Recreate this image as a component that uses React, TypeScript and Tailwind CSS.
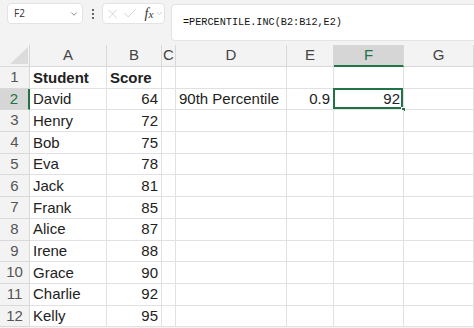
import { ChevronDown, X, Check } from "lucide-react";

const cols = ["A", "B", "C", "D", "E", "F", "G"];

const rows: [string, string, string, string][] = [
  ["Student", "Score", "", ""],
  ["David", "64", "90th Percentile", "0.9"],
  ["Henry", "72", "", ""],
  ["Bob", "75", "", ""],
  ["Eva", "78", "", ""],
  ["Jack", "81", "", ""],
  ["Frank", "85", "", ""],
  ["Alice", "87", "", ""],
  ["Irene", "88", "", ""],
  ["Grace", "90", "", ""],
  ["Charlie", "92", "", ""],
  ["Kelly", "95", "", ""],
];

const cell = "border-r border-b border-[#e1e1e1] bg-white h-[21.7px] flex items-center overflow-visible whitespace-nowrap px-[3px] pt-[1px]";

export default function App() {
  return (
    <div
      className="w-[474px] h-[328px] overflow-hidden bg-[#f3f3f3] text-[#222]"
      style={{ fontFamily: '"Liberation Sans", Arial, sans-serif' }}
    >
      {/* formula bar */}
      <div className="flex items-start h-[45px] pt-[3px] pl-[7px]">
        <div className="w-[76px] h-[21px] bg-white border border-[#e3e3e3] rounded-[4px] flex items-center justify-between pl-[6px] pr-[3px]">
          <span className="text-[10px] font-['Open_Sans'] text-[#333]">F2</span>
          <ChevronDown size={10} strokeWidth={1.6} className="text-[#555]" />
        </div>
        <div className="w-[19px] h-[21px] flex flex-col items-center justify-center gap-[2px]">
          <span className="w-[2px] h-[2px] bg-[#666]" />
          <span className="w-[2px] h-[2px] bg-[#666]" />
          <span className="w-[2px] h-[2px] bg-[#666]" />
        </div>
        <div className="w-[63px] h-[21px] bg-white border border-[#e3e3e3] rounded-[4px] flex items-center pl-[2px] gap-[2px]">
          <X size={16} strokeWidth={1.1} className="text-[#c4c4c4]" />
          <Check size={17} strokeWidth={1.1} className="text-[#c4c4c4]" />
          <span className="ml-[4px] text-[14px] italic font-['Liberation_Serif'] text-[#333] leading-none">
            f<span className="text-[11px]">x</span>
          </span>
          <ChevronDown size={9} strokeWidth={1.4} className="text-[#999]" />
        </div>
        <div className="ml-[6px] flex-1 h-[37px] mt-[1px] bg-white border border-[#e3e3e3] rounded-l-[4px] border-r-0 pl-[11px] pt-[3px]">
          <span className="text-[10.2px] font-['Liberation_Mono'] text-[#111]">=PERCENTILE.INC(B2:B12,E2)</span>
        </div>
      </div>

      {/* grid */}
      <div className="grid grid-cols-[30px_77px_55px_14px_111px_47px_70px_70px]">
        <div className="h-[22px] border-r border-b border-[#d8d8d8] relative">
          <svg className="absolute left-[10px] top-[2px]" width="18" height="17" viewBox="0 0 18 17">
            <polygon points="18,0 18,17 0,17" fill="#dcdcdc" />
          </svg>
        </div>
        {cols.map((c) => (
          <div
            key={c}
            className={
              c === "F"
                ? "h-[22px] flex items-center justify-center text-[15px] bg-[#d6d6d6] text-[#217346] border-r border-[#d8d8d8] border-b-2 border-b-[#217346]"
                : "h-[22px] flex items-center justify-center text-[15px] text-[#444] border-r border-b border-[#d8d8d8]"
            }
          >
            {c}
          </div>
        ))}

        {rows.map((r, i) => {
          const n = i + 1;
          const sel = n === 2;
          return [
            <div
              key={`h${n}`}
              className={
                sel
                  ? "h-[21.7px] flex items-center justify-center text-[15px] bg-[#d6d6d6] text-[#217346] border-b border-[#d8d8d8] border-r-2 border-r-[#217346]"
                  : "h-[21.7px] flex items-center justify-center text-[15px] text-[#555] border-r border-b border-[#d8d8d8]"
              }
            >
              {n}
            </div>,
            <div key={`a${n}`} className={`${cell} text-[15px] ${n === 1 ? "font-bold" : ""}`}>
              {r[0]}
            </div>,
            <div key={`b${n}`} className={`${cell} text-[15px] ${n === 1 ? "font-bold" : "justify-end"}`}>
              {r[1]}
            </div>,
            <div key={`c${n}`} className={cell} />,
            <div key={`d${n}`} className={`${cell} text-[15px]`}>
              {r[2]}
            </div>,
            <div key={`e${n}`} className={`${cell} text-[15px] justify-end`}>
              {r[3]}
            </div>,
            <div key={`f${n}`} className={`${cell} text-[15px] justify-end relative`}>
              {sel && (
                <>
                  <span className="absolute -left-px -top-px right-0 bottom-0 border-2 border-[#217346]" />
                  <span className="absolute -right-[3px] -bottom-[3px] w-[5px] h-[5px] bg-[#217346] border border-white" />
                  <span className="relative">92</span>
                </>
              )}
            </div>,
            <div key={`g${n}`} className={cell} />,
          ];
        })}
      </div>
    </div>
  );
}
